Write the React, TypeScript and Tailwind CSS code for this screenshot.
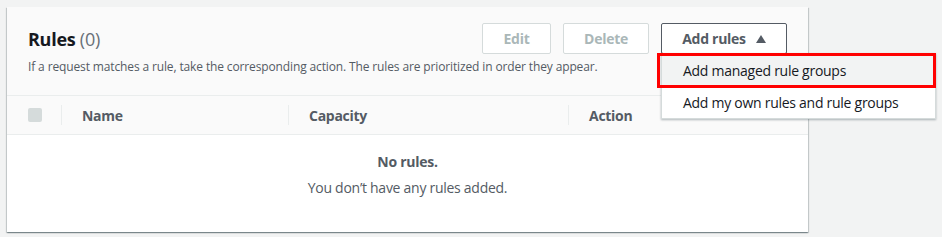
import { useState } from 'react';

const font = { fontFamily: '"Open Sans", "Noto Sans", Arial, sans-serif' };

export default function App() {
  const [open] = useState(true);

  return (
    <div className="h-[237px] w-[942px] overflow-hidden bg-[#f2f3f3] pl-[7px] pt-[7px] tracking-[-0.017em]" style={font}>
      <div className="relative w-[801px] bg-white shadow-[0_1px_1px_0_rgba(0,28,36,0.3),1px_1px_1px_0_rgba(0,28,36,0.15),-1px_1px_1px_0_rgba(0,28,36,0.15)]">
        {/* Header */}
        <div className="border-b border-[#eaeded] bg-[#fafafa] pl-[21px] pr-[21px] pt-[16px] pb-[20px]">
          <div className="flex items-center justify-between">
            <h2 className="text-[18px] font-bold leading-[22px] text-[#16191f]">
              Rules <span className="font-normal text-[#687078]">(0)</span>
            </h2>
            <div className="flex items-center gap-3">
              <button className="h-[31px] w-[69px] rounded-[2px] border border-[#d5dbdb] bg-white text-[14px] font-bold text-[#aab7b8]">
                Edit
              </button>
              <button className="h-[31px] w-[86px] rounded-[2px] border border-[#d5dbdb] bg-white text-[14px] font-bold text-[#aab7b8]">
                Delete
              </button>
              <div className="relative">
                <button className="flex h-[31px] w-[126px] items-center justify-center gap-[10px] rounded-[2px] border border-[#545b64] bg-white text-[14px] font-bold text-[#545b64]">
                  Add rules
                  <svg width="10" height="8" viewBox="0 0 10 8">
                    <path d="M5 0 L10 8 L0 8 Z" fill="#545b64" />
                  </svg>
                </button>

                {open && (
                  <div className="absolute left-0 top-[30px] z-10 w-[275px] border border-[#d5dbdb] bg-white shadow-[0_1px_2px_rgba(0,28,36,0.3)]">
                    <div className="relative flex h-[33px] items-center bg-[#f2f3f3] pl-[21px] text-[14px] text-[#16191f]">
                      Add managed rule groups
                      <div className="pointer-events-none absolute -left-[5px] -right-[1px] -top-[1px] -bottom-[1px] border-[3px] border-[#ff0000]" />
                    </div>
                    <div className="flex h-[31px] items-center pl-[21px] text-[14px] text-[#16191f]">
                      Add my own rules and rule groups
                    </div>
                  </div>
                )}
              </div>
            </div>
          </div>
          <p className="mt-[5px] text-[12px] leading-[16px] tracking-[-0.011em] text-[#545b64]">
            If a request matches a rule, take the corresponding action. The rules are prioritized in order they appear.
          </p>
        </div>

        {/* Table header */}
        <div className="flex h-[39px] items-center border-b border-[#eaeded] bg-[#fafafa] text-[14px] font-bold text-[#545b64]">
          <div className="flex w-[54px] items-center pl-[21px]">
            <div className="h-[14px] w-[14px] rounded-[2px] bg-[#d5dbdb]" />
          </div>
          <div className="flex h-[20px] w-[227px] items-center border-l border-[#eaeded] pl-[20px]">Name</div>
          <div className="flex h-[20px] w-[280px] items-center border-l border-[#eaeded] pl-[20px]">Capacity</div>
          <div className="flex h-[20px] flex-1 items-center border-l border-[#eaeded] pl-[20px]">Action</div>
        </div>

        {/* Empty state */}
        <div className="flex h-[97px] flex-col items-center pt-[16px] text-[14px] text-[#545b64]">
          <div className="font-bold leading-[22px]">No rules.</div>
          <div className="mt-[4px] leading-[22px]">You don’t have any rules added.</div>
        </div>
      </div>
    </div>
  );
}
